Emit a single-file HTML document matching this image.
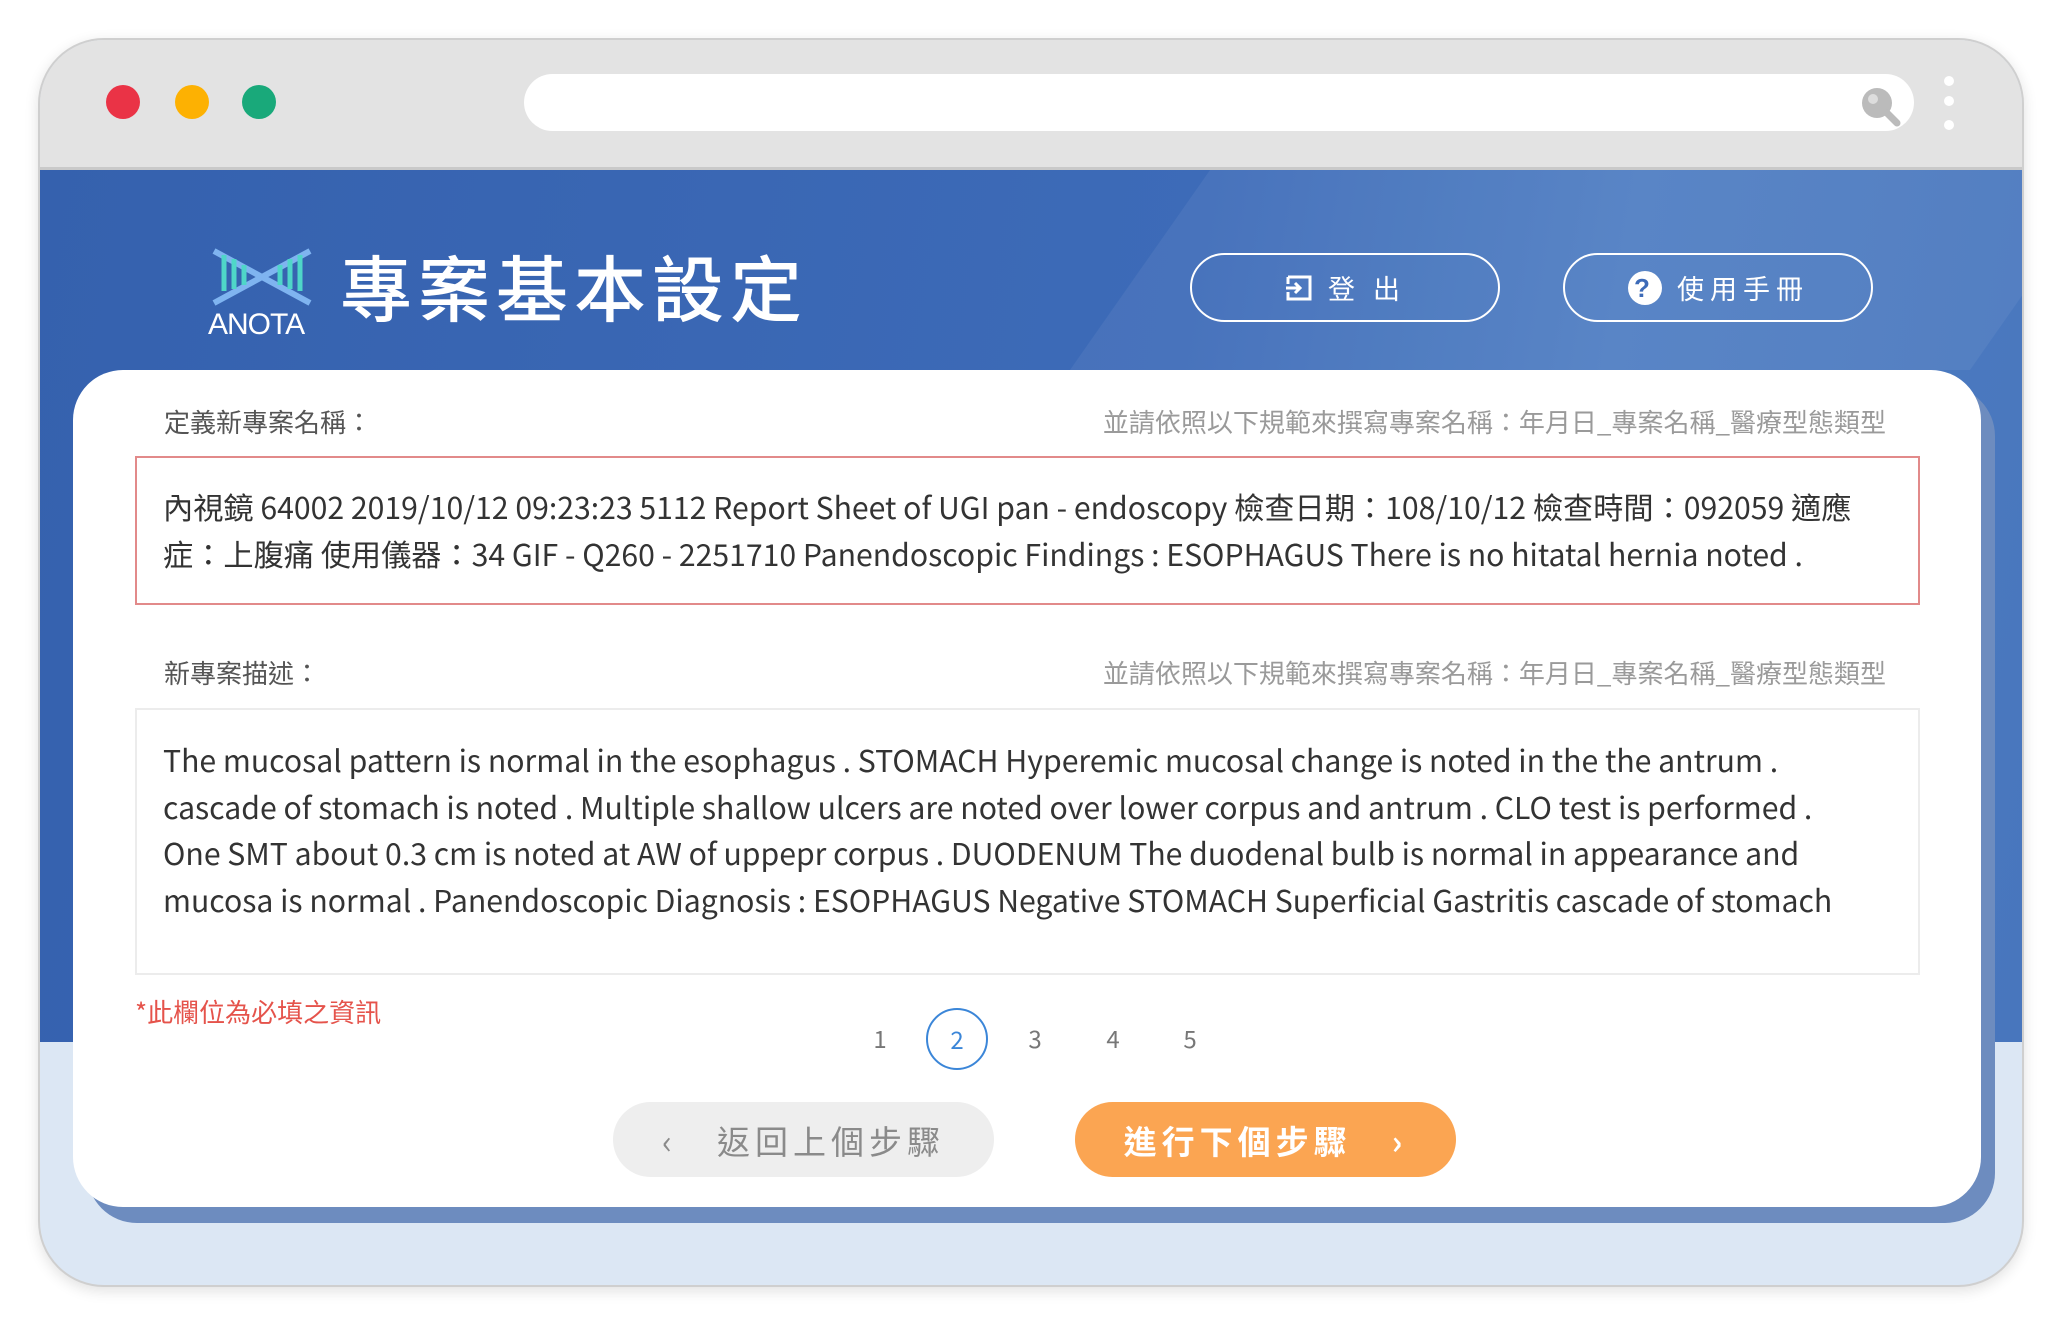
<!DOCTYPE html>
<html><head><meta charset="utf-8"><style>
*{margin:0;padding:0;box-sizing:border-box}
body{width:2064px;height:1326px;background:#fff;position:relative;overflow:hidden;font-family:"Liberation Sans","Noto Sans CJK TC",sans-serif}
.cjk{font-family:"Noto Sans CJK TC","Liberation Sans",sans-serif}
#frame{position:absolute;left:38px;top:38px;width:1986px;height:1249px;border-radius:66px;overflow:hidden;background:#dce7f4;border:2px solid #cfcfcf;box-shadow:0 4px 14px rgba(0,0,0,.12)}
#bar{position:absolute;left:0;top:0;width:100%;height:130px;background:#e3e3e3;border-bottom:3px solid #c9c9c9}
.dot{position:absolute;top:45px;width:34px;height:34px;border-radius:50%}
#addr{position:absolute;left:484px;top:34px;width:1390px;height:57px;border-radius:29px;background:#fff}
#hdr{position:absolute;left:0;top:130px;width:100%;height:872px;background:linear-gradient(100deg,#3561ae 0%,#3d6bb8 55%,#4f7ec3 75%,#4876bd 100%);overflow:hidden}
#card{position:absolute;left:33px;top:330px;width:1908px;height:837px;background:#fff;border-radius:50px;box-shadow:14px 16px 0 #6d8cbf}
.btn{position:absolute;top:213px;width:310px;height:69px;border:2px solid #fff;border-radius:35px;color:#fff;font-size:27px;letter-spacing:6px;display:flex;align-items:center;justify-content:center;gap:14px}
.lbl{position:absolute;left:91px;font-size:26px;color:#555}
.hint{position:absolute;right:95px;font-size:26px;color:#9a9a9a}
.box{position:absolute;left:62px;width:1785px;font-size:30.2px;color:#333;line-height:46.5px;padding-left:26px;white-space:nowrap}
.pg{position:absolute;top:968px;height:62px;line-height:60px;font-size:24px;color:#777;width:62px;text-align:center;margin-left:-31px}
</style></head><body>
<div id="frame">
<div id="bar">
<div class="dot" style="left:66px;background:#ea3346"></div>
<div class="dot" style="left:135px;background:#fdb102"></div>
<div class="dot" style="left:202px;background:#19a97a"></div>
<div id="addr"></div>
<svg style="position:absolute;left:1818px;top:44px" width="44" height="44" viewBox="0 0 44 44"><circle cx="19" cy="19" r="15" fill="#bbb"/><line x1="29" y1="29" x2="39" y2="39" stroke="#bbb" stroke-width="7" stroke-linecap="round"/><circle cx="15" cy="15" r="5" fill="#ddd"/></svg>
<div style="position:absolute;left:1904px;top:36px;width:10px;height:10px;border-radius:50%;background:#fff"></div>
<div style="position:absolute;left:1904px;top:56px;width:10px;height:10px;border-radius:50%;background:#fff"></div>
<div style="position:absolute;left:1904px;top:80px;width:10px;height:10px;border-radius:50%;background:#fff"></div>
</div>
<div id="hdr">
<div style="position:absolute;left:1100px;top:0;width:900px;height:200px;background:rgba(255,255,255,.06);transform:skewX(-35deg)"></div>
<svg style="position:absolute;left:170px;top:77px" width="104" height="60" viewBox="0 0 104 60"><path d="M4 4 L100 56 M100 4 L4 56" stroke="#7fb4f0" stroke-width="6"/><path d="M14 8v36M24 12v30M34 18v20M70 18v20M80 12v30M90 8v36" stroke="#4fd6c8" stroke-width="5"/></svg>
<div style="position:absolute;left:168px;top:138px;color:#fff;font-size:30px;letter-spacing:-1px">ANOTA</div>
<div class="cjk" style="position:absolute;left:300px;top:62px;color:#fff;font-size:72px;letter-spacing:6px;font-weight:500">專案基本設定</div>
<div class="btn cjk" style="left:1150px;top:83px"><svg width="30" height="30" viewBox="0 0 30 30"><path d="M4 4h22v22H4v-7M4 11V4" fill="none" stroke="#fff" stroke-width="3"/><path d="M2 15h14M11 10l5 5-5 5" fill="none" stroke="#fff" stroke-width="3"/></svg>登 出</div>
<div class="btn cjk" style="left:1523px;top:83px"><svg width="36" height="36" viewBox="0 0 36 36"><circle cx="18" cy="18" r="17" fill="#fff"/><text x="18" y="27" text-anchor="middle" font-size="26" font-weight="bold" fill="#3d6bb8" font-family="Liberation Sans">?</text></svg>使用手冊</div>
</div>
<div id="card" class="cjk">
<div class="lbl" style="top:33px">定義新專案名稱：</div>
<div class="hint" style="top:33px">並請依照以下規範來撰寫專案名稱：年月日_專案名稱_醫療型態類型</div>
<div class="box" style="top:86px;height:149px;border:2px solid #e28a8a;padding-top:25px">內視鏡 64002 2019/10/12 09:23:23 5112 Report Sheet of UGI pan - endoscopy 檢查日期：108/10/12 檢查時間：092059 適應<br>症：上腹痛 使用儀器：34 GIF - Q260 - 2251710 Panendoscopic Findings : ESOPHAGUS There is no hitatal hernia noted .</div>
<div class="lbl" style="top:284px">新專案描述：</div>
<div class="hint" style="top:284px">並請依照以下規範來撰寫專案名稱：年月日_專案名稱_醫療型態類型</div>
<div class="box" style="top:338px;height:267px;border:2px solid #ececec;padding-top:26px">The mucosal pattern is normal in the esophagus . STOMACH Hyperemic mucosal change is noted in the the antrum .<br>cascade of stomach is noted . Multiple shallow ulcers are noted over lower corpus and antrum . CLO test is performed .<br>One SMT about 0.3 cm is noted at AW of uppepr corpus . DUODENUM The duodenal bulb is normal in appearance and<br>mucosa is normal . Panendoscopic Diagnosis : ESOPHAGUS Negative STOMACH Superficial Gastritis cascade of stomach</div>
<div style="position:absolute;left:62px;top:623px;font-size:26px;color:#e5534b">*此欄位為必填之資訊</div>
</div>
<div class="pg cjk" style="left:840px">1</div>
<div class="pg cjk" style="left:917px;border:2px solid #3b86d8;border-radius:50%;line-height:58px;color:#3b86d8">2</div>
<div class="pg cjk" style="left:995px">3</div>
<div class="pg cjk" style="left:1073px">4</div>
<div class="pg cjk" style="left:1150px">5</div>
<div class="cjk" style="position:absolute;left:573px;top:1062px;width:381px;height:75px;border-radius:38px;background:#eeeeee;color:#8a8a8a;font-size:33px;letter-spacing:5px;display:flex;align-items:center;justify-content:center;gap:40px"><span>‹</span>返回上個步驟</div>
<div class="cjk" style="position:absolute;left:1035px;top:1062px;width:381px;height:75px;border-radius:38px;background:#fba552;color:#fff;font-size:33px;font-weight:bold;letter-spacing:5px;display:flex;align-items:center;justify-content:center;gap:40px">進行下個步驟<span>›</span></div>
</div>
</body></html>
